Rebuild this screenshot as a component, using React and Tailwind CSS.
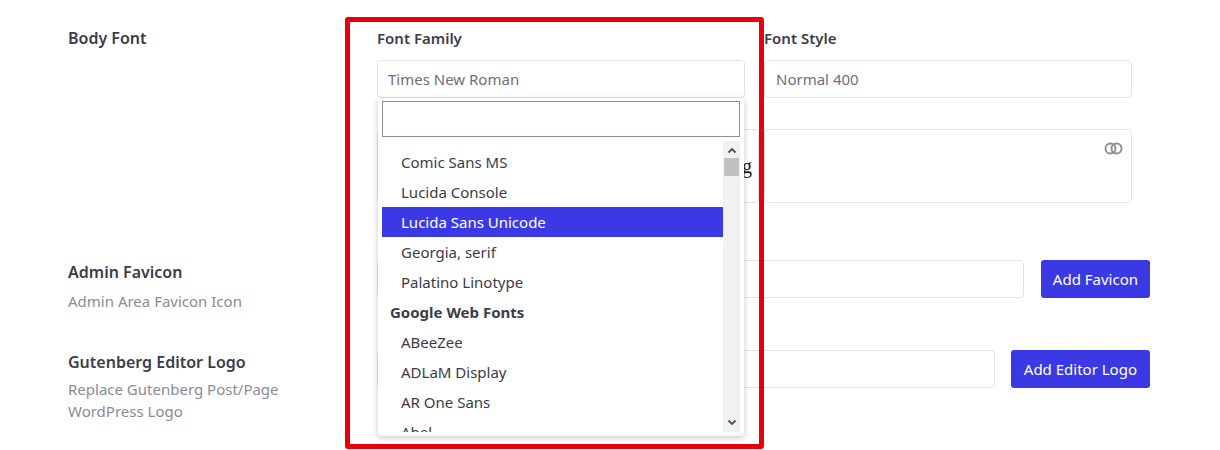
import React from 'react';

const fonts = [
  { label: 'Comic Sans MS' },
  { label: 'Lucida Console' },
  { label: 'Lucida Sans Unicode', active: true },
  { label: 'Georgia, serif' },
  { label: 'Palatino Linotype' },
  { label: 'Google Web Fonts', group: true },
  { label: 'ABeeZee' },
  { label: 'ADLaM Display' },
  { label: 'AR One Sans' },
  { label: 'Abel' },
];

function ToggleIcon() {
  return (
    <svg width="19" height="13" viewBox="0 0 19 13" fill="none" stroke="#8d8d95" strokeWidth="1.9">
      <circle cx="6.5" cy="6.5" r="5" />
      <circle cx="12.5" cy="6.5" r="5" />
    </svg>
  );
}

function FontDropdown() {
  return (
    <div className="absolute left-[1px] right-[1px] top-[38px] h-[338px] bg-white rounded-b-[4px] shadow-[0_2px_6px_rgba(0,0,0,0.22)] px-[4px] pt-[3px] z-10">
      <div className="h-[36px] border border-[#8f8f96] bg-white" />
      <div className="flex h-[291px] mt-[4px] overflow-hidden">
        <ul className="flex-1 overflow-hidden pt-[6px]">
          {fonts.map(f => (
            <li
              key={f.label}
              className={
                f.group
                  ? 'h-[30px] flex items-center pl-[8px] font-bold text-[#3c3c4b]'
                  : f.active
                    ? 'h-[30px] flex items-center pl-[19px] bg-[#3b39e3] text-white'
                    : 'h-[30px] flex items-center pl-[19px] text-[#3c3c48]'
              }
            >
              {f.label}
            </li>
          ))}
        </ul>
        <div className="w-[17px] bg-[#f1f1f1] flex flex-col items-center">
          <svg width="10" height="8" viewBox="0 0 10 8" className="mt-[6px]">
            <path d="M1.5 5.5 L5 2 L8.5 5.5" fill="none" stroke="#505050" strokeWidth="1.8" />
          </svg>
          <div className="w-[15px] h-[18px] bg-[#c1c1c1] mt-[3px]" />
          <div className="flex-1" />
          <svg width="10" height="8" viewBox="0 0 10 8" className="mb-[6px]">
            <path d="M1.5 2.5 L5 6 L8.5 2.5" fill="none" stroke="#505050" strokeWidth="1.8" />
          </svg>
        </div>
      </div>
    </div>
  );
}

export default function App() {
  return (
    <div className="relative w-[1220px] h-[450px] bg-white overflow-hidden font-['Noto_Sans',sans-serif] text-[15px]">
      <div className="flex pl-[68px] pt-[26px]">
        <div className="w-[309px] text-[16px] font-semibold text-[#3c3c4b] leading-[24px]">Body Font</div>
        <div className="grid grid-cols-[368px_368px] gap-x-[19px]">
          <div>
            <div className="text-[15px] font-semibold text-[#3c3c4b] leading-[22px] mt-[1px]">Font Family</div>
            <div className="relative mt-[11px]">
              <div className="h-[38px] border border-[#e3e3e8] rounded-[4px] flex items-center pl-[10px] text-[#6e6e7c]">
                Times New Roman
              </div>
              <FontDropdown />
            </div>
          </div>
          <div>
            <div className="text-[15px] font-semibold text-[#3c3c4b] leading-[22px] mt-[1px]">Font Style</div>
            <div className="mt-[11px] h-[38px] border border-[#e3e3e8] rounded-[4px] flex items-center pl-[11px] text-[#6e6e7c]">
              Normal 400
            </div>
          </div>
          <div className="mt-[31px] h-[74px] w-[382px] border border-[#e3e3e8] rounded-[4px] flex items-center justify-end pr-[6px] overflow-hidden">
            <span className="font-['Liberation_Serif',serif] text-[20px] text-[#222] whitespace-nowrap">The quick brown fox is jumping</span>
          </div>
          <div className="mt-[31px] h-[74px] border border-[#e3e3e8] rounded-[4px] flex justify-end pt-[12px] pr-[8px]">
            <ToggleIcon />
          </div>
        </div>
      </div>

      <div className="flex pl-[68px] mt-[58px]">
        <div className="w-[309px] -mt-[1px]">
          <div className="text-[16px] font-semibold text-[#3c3c4b] leading-[24px]">Admin Favicon</div>
          <div className="text-[#8b8b98] leading-[22px] mt-[6px]">Admin Area Favicon Icon</div>
        </div>
        <div className="w-[773px] flex gap-[17px] -mt-[1px]">
          <div className="flex-1 h-[38px] border border-[#e3e3e8] rounded-[4px]" />
          <button className="h-[38px] px-[12px] bg-[#3b39e3] text-white rounded-[3px]">Add Favicon</button>
        </div>
      </div>

      <div className="flex pl-[68px] mt-[38px]">
        <div className="w-[309px]">
          <div className="text-[16px] font-semibold text-[#3c3c4b] leading-[24px]">Gutenberg Editor Logo</div>
          <div className="text-[#8b8b98] leading-[22px] mt-[4px]">
            Replace Gutenberg Post/Page
            <br />
            WordPress Logo
          </div>
        </div>
        <div className="w-[773px] flex gap-[16px]">
          <div className="flex-1 h-[38px] border border-[#e3e3e8] rounded-[4px]" />
          <button className="h-[38px] px-[13px] bg-[#3b39e3] text-white rounded-[3px]">Add Editor Logo</button>
        </div>
      </div>

      <div className="absolute left-[345px] top-[17px] w-[419px] h-[432px] border-[5px] border-[#e8000c] rounded-[3px] pointer-events-none z-20" />
    </div>
  );
}
